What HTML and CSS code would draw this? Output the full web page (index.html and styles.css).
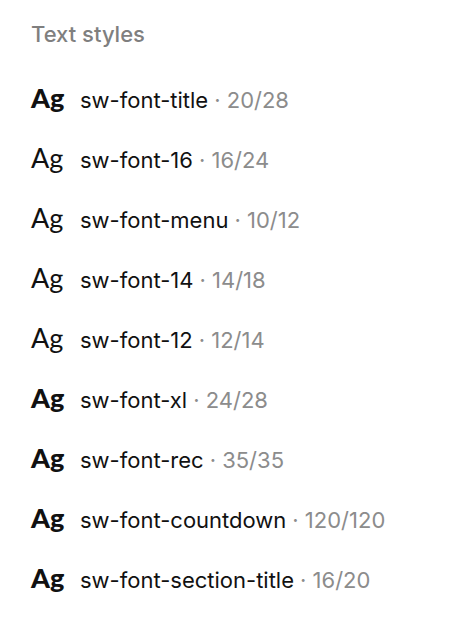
FILE: index.html
```html
<!DOCTYPE html>
<html>
<head>
<meta charset="utf-8">
<link rel="stylesheet" href="styles.css">
</head>
<body>
<div class="panel">
  <div class="heading">Text styles</div>
  <ul class="list">
    <li class="row"><span class="ag bold">Ag</span><span class="name">sw-font-title</span><span class="meta">· 20/28</span></li>
    <li class="row"><span class="ag">Ag</span><span class="name">sw-font-16</span><span class="meta">· 16/24</span></li>
    <li class="row"><span class="ag">Ag</span><span class="name">sw-font-menu</span><span class="meta">· 10/12</span></li>
    <li class="row"><span class="ag">Ag</span><span class="name">sw-font-14</span><span class="meta">· 14/18</span></li>
    <li class="row"><span class="ag">Ag</span><span class="name">sw-font-12</span><span class="meta">· 12/14</span></li>
    <li class="row"><span class="ag bold">Ag</span><span class="name">sw-font-xl</span><span class="meta">· 24/28</span></li>
    <li class="row"><span class="ag bold">Ag</span><span class="name">sw-font-rec</span><span class="meta">· 35/35</span></li>
    <li class="row"><span class="ag bold">Ag</span><span class="name">sw-font-countdown</span><span class="meta">· 120/120</span></li>
    <li class="row"><span class="ag bold">Ag</span><span class="name">sw-font-section-title</span><span class="meta">· 16/20</span></li>
  </ul>
</div>
</body>
</html>
```
FILE: styles.css
```css
html, body { margin: 0; padding: 0; background: #ffffff; }
body { font-family: Inter, "Liberation Sans", sans-serif; color: #111111; }
.panel { padding: 21px 31px; }
.heading { font-size: 22px; line-height: 26px; color: #7f7f7f; font-weight: 500; margin-bottom: 36px; }
.list { list-style: none; margin: 0; padding: 0; display: flex; flex-direction: column; gap: 30px; }
.row { display: flex; align-items: baseline; height: 30px; line-height: 30px; }
.ag { font-family: Lato, sans-serif; font-size: 27px; width: 49px; flex: none; color: #111; }
.ag.bold { font-weight: 900; }
.name { font-size: 22px; color: #111; }
.meta { font-size: 22px; color: #8c8c8c; margin-left: 6px; }
```
